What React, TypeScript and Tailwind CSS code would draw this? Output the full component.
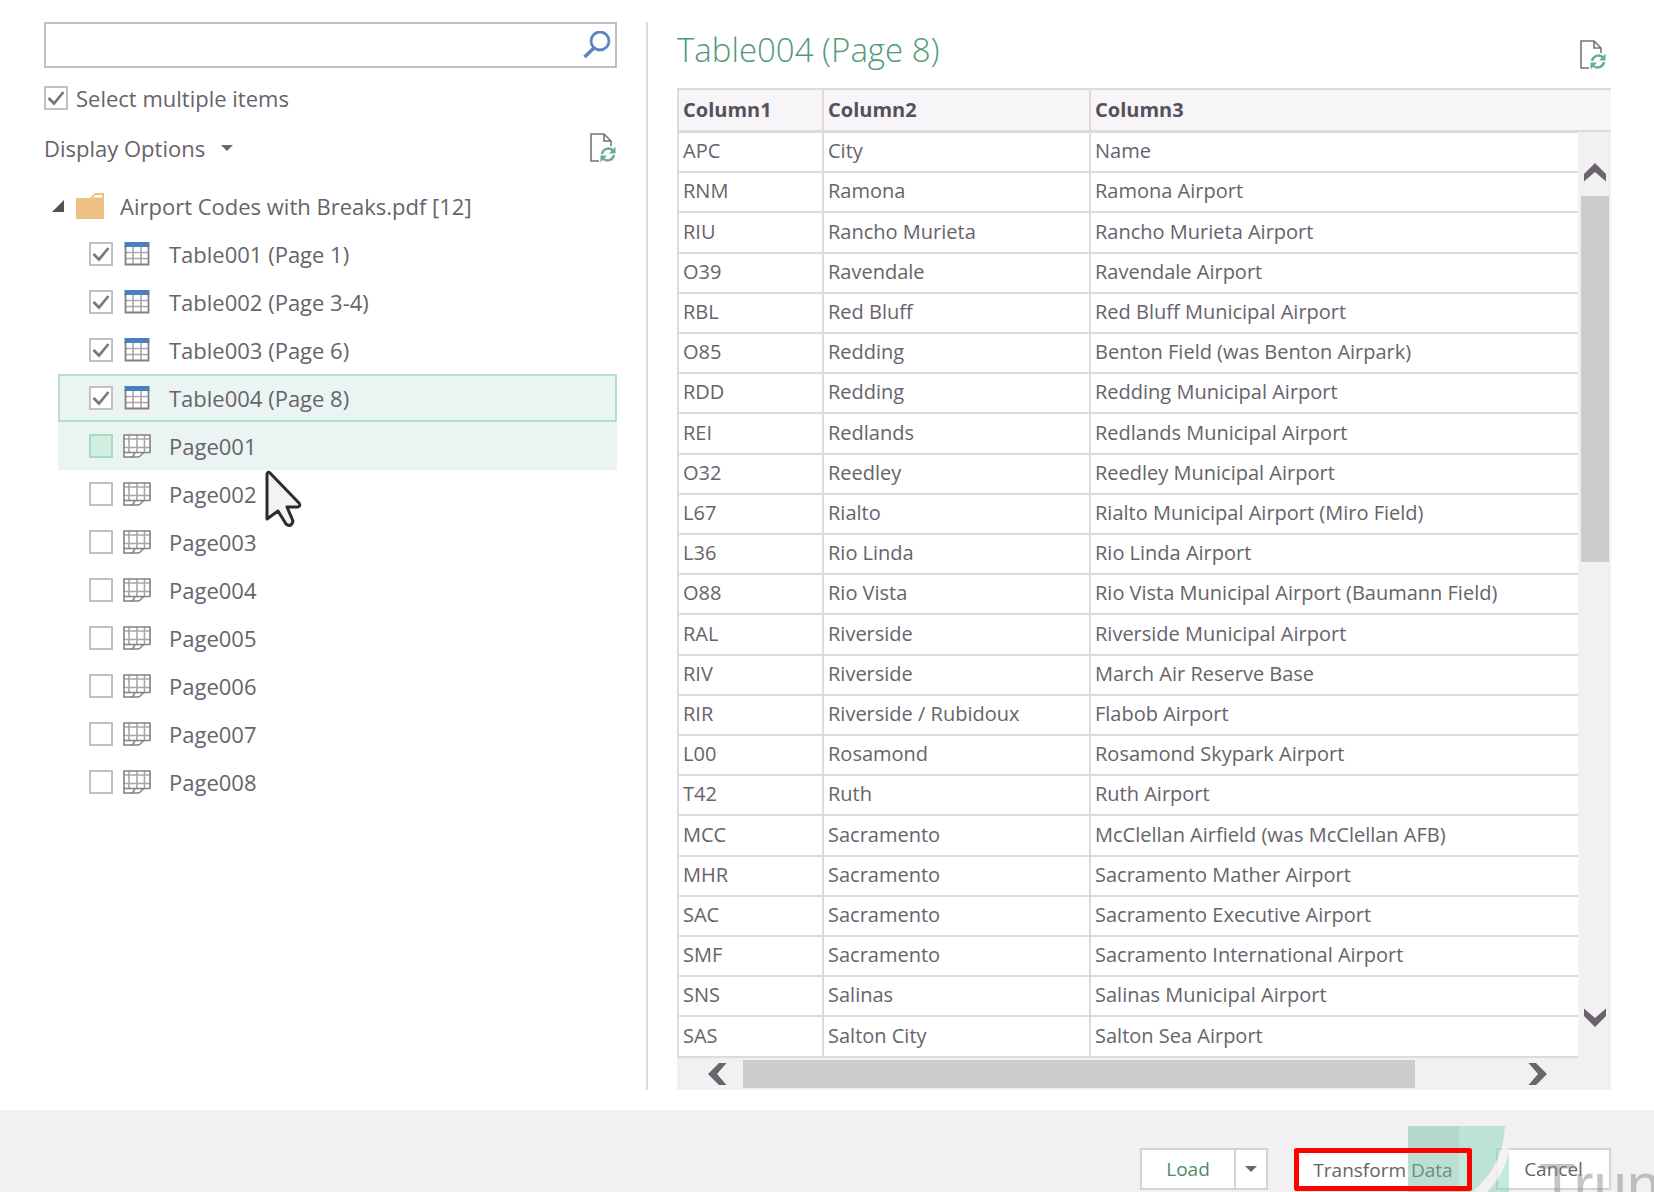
import { useState } from "react";

interface TreeItem {
  id: string;
  label: string;
  kind: "table" | "page";
}

const treeItems: TreeItem[] = [
  { id: "t1", label: "Table001 (Page 1)", kind: "table" },
  { id: "t2", label: "Table002 (Page 3-4)", kind: "table" },
  { id: "t3", label: "Table003 (Page 6)", kind: "table" },
  { id: "t4", label: "Table004 (Page 8)", kind: "table" },
  { id: "p1", label: "Page001", kind: "page" },
  { id: "p2", label: "Page002", kind: "page" },
  { id: "p3", label: "Page003", kind: "page" },
  { id: "p4", label: "Page004", kind: "page" },
  { id: "p5", label: "Page005", kind: "page" },
  { id: "p6", label: "Page006", kind: "page" },
  { id: "p7", label: "Page007", kind: "page" },
  { id: "p8", label: "Page008", kind: "page" },
];

const columns = ["Column1", "Column2", "Column3"];

const rows = [
  ["APC", "City", "Name"],
  ["RNM", "Ramona", "Ramona Airport"],
  ["RIU", "Rancho Murieta", "Rancho Murieta Airport"],
  ["O39", "Ravendale", "Ravendale Airport"],
  ["RBL", "Red Bluff", "Red Bluff Municipal Airport"],
  ["O85", "Redding", "Benton Field (was Benton Airpark)"],
  ["RDD", "Redding", "Redding Municipal Airport"],
  ["REI", "Redlands", "Redlands Municipal Airport"],
  ["O32", "Reedley", "Reedley Municipal Airport"],
  ["L67", "Rialto", "Rialto Municipal Airport (Miro Field)"],
  ["L36", "Rio Linda", "Rio Linda Airport"],
  ["O88", "Rio Vista", "Rio Vista Municipal Airport (Baumann Field)"],
  ["RAL", "Riverside", "Riverside Municipal Airport"],
  ["RIV", "Riverside", "March Air Reserve Base"],
  ["RIR", "Riverside / Rubidoux", "Flabob Airport"],
  ["L00", "Rosamond", "Rosamond Skypark Airport"],
  ["T42", "Ruth", "Ruth Airport"],
  ["MCC", "Sacramento", "McClellan Airfield (was McClellan AFB)"],
  ["MHR", "Sacramento", "Sacramento Mather Airport"],
  ["SAC", "Sacramento", "Sacramento Executive Airport"],
  ["SMF", "Sacramento", "Sacramento International Airport"],
  ["SNS", "Salinas", "Salinas Municipal Airport"],
  ["SAS", "Salton City", "Salton Sea Airport"],
];

const RefreshPageIcon = () => (
  <svg className="h-8 w-7" viewBox="0 0 28 32" fill="none">
    <path
      d="M10 29H2V2H15L22 9V14M15 2V9H22"
      stroke="#77737a"
      strokeWidth="1.6"
    />
    <path
      d="M13 22A6.5 6.5 0 0 1 24 18.5M25 23A6.5 6.5 0 0 1 14 26.5"
      stroke="#68ab97"
      strokeWidth="2.4"
    />
    <path d="M26.5 14.5V21.5H20ZM11.5 30.5V23.5H18Z" fill="#68ab97" />
  </svg>
);

const TableIcon = () => (
  <svg className="h-6 w-7" viewBox="0 0 28 24" fill="none">
    <rect x="2" y="1" width="24" height="22" fill="#fff" />
    <path
      d="M10 5V22M18 5V22M3 10.5H25M3 16.5H25"
      stroke="#aaa5ac"
      strokeWidth="1.6"
    />
    <path d="M2.5 4V22.5H25.5V4" stroke="#858088" strokeWidth="1.8" />
    <path d="M1.5 0H26.5V5H1.5Z" fill="#4a7fbe" />
  </svg>
);

const PageIcon = () => (
  <svg className="h-6 w-7" viewBox="0 0 28 24" fill="none">
    <path d="M1 1H27V19H21L17 23H1Z" fill="#fff" />
    <path
      d="M6 1V18M14 1V18M21.5 1V18M1 5H27M1 13.5H27"
      stroke="#aaa5ac"
      strokeWidth="1.6"
    />
    <path
      d="M1 1H27V18.5H1ZM1 18.5V23H8Q10 23 11 20.5L12 18.5M8 23H15Q17 23 18 21L21 18.5"
      stroke="#858088"
      strokeWidth="1.6"
    />
  </svg>
);

const Caret = () => (
  <svg className="h-2 w-3" viewBox="0 0 12 8">
    <path d="M0 1H12L6 7Z" fill="#6b676e" />
  </svg>
);

const Chevron = ({ className }: { className: string }) => (
  <svg className={className} viewBox="0 0 24 24">
    <path d="M1 14L12 3L23 14V21.5L12 12L1 21.5Z" fill="#69656b" />
  </svg>
);

interface CheckProps {
  checked: boolean;
  hovered?: boolean;
  onChange: () => void;
}

const Check = ({ checked, hovered, onChange }: CheckProps) => (
  <span className="grid size-6 shrink-0">
    <input
      type="checkbox"
      checked={checked}
      onChange={onChange}
      className={`col-start-1 row-start-1 appearance-none border-2 ${
        hovered ? "border-[#a9d9c4] bg-[#d0efe1]" : "border-[#c3bfc6] bg-white"
      }`}
    />
    {checked && (
      <svg
        className="pointer-events-none col-start-1 row-start-1 size-6"
        viewBox="0 0 24 24"
      >
        <path
          d="M4.5 12L10 17.5L19.5 6"
          fill="none"
          stroke="#77737a"
          strokeWidth="2.6"
        />
      </svg>
    )}
  </span>
);

const Navigator = () => {
  const [multiple, setMultiple] = useState(true);
  const [checkedIds, setCheckedIds] = useState(["t1", "t2", "t3", "t4"]);
  const selectedId = "t4";
  const hoveredId = "p1";

  const toggle = (id: string) => {
    setCheckedIds((prev) =>
      prev.includes(id) ? prev.filter((x) => x !== id) : [...prev, id],
    );
  };

  const rowStyle = (id: string) => {
    if (id === selectedId) return "border-[#b3dfcb] bg-[#eaf4f2]";
    if (id === hoveredId) return "border-transparent bg-[#eaf4f2]";
    return "border-transparent";
  };

  return (
    <aside className="flex w-[604px] shrink-0 flex-col border-r-2 border-[#dcd9de] pr-[29px]">
      <div className="flex h-[46px] items-center border-2 border-[#c3bfc6] pr-1">
        <input
          type="text"
          aria-label="Search"
          className="h-full min-w-0 flex-1 px-2 outline-none"
        />
        <button aria-label="Search">
          <svg className="size-7" viewBox="0 0 28 28" fill="none">
            <circle cx="17" cy="10" r="9" stroke="#5a88be" strokeWidth="2.8" />
            <path d="M11 17L1.5 26" stroke="#5a88be" strokeWidth="3.6" />
          </svg>
        </button>
      </div>

      <label className="mt-4 flex h-7 items-center gap-2">
        <Check checked={multiple} onChange={() => setMultiple(!multiple)} />
        Select multiple items
      </label>

      <div className="mt-[18px] flex h-9 items-center justify-between">
        <button className="flex items-center gap-4">
          Display Options
          <Caret />
        </button>
        <button aria-label="Refresh">
          <RefreshPageIcon />
        </button>
      </div>

      <div className="mt-4 flex h-12 items-center pl-2">
        <svg className="size-3" viewBox="0 0 12 12">
          <path d="M12 0V12H0Z" fill="#55515a" />
        </svg>
        <svg className="ml-3 h-[26px] w-7" viewBox="0 0 28 26">
          <path d="M0 5H14L19 0H28V26H0Z" fill="#edc184" />
          <path d="M17 4.5L19.5 2H26V4.5Z" fill="#fff" />
        </svg>
        <span className="ml-4">Airport Codes with Breaks.pdf [12]</span>
      </div>

      <ul className="ml-3.5">
        {treeItems.map((item) => (
          <li key={item.id}>
            <label
              className={`flex h-12 items-center border-2 pl-[29px] ${rowStyle(item.id)}`}
            >
              <Check
                checked={checkedIds.includes(item.id)}
                hovered={item.id === hoveredId}
                onChange={() => toggle(item.id)}
              />
              <span className="mr-[18px] ml-2.5">
                {item.kind === "table" ? <TableIcon /> : <PageIcon />}
              </span>
              {item.label}
            </label>
          </li>
        ))}
      </ul>
    </aside>
  );
};

const Preview = () => (
  <section className="ml-[29px] flex min-w-0 flex-1 flex-col">
    <div className="flex h-[66px] items-center justify-between pr-1">
      <h1 className="self-start text-[33px] leading-14 font-light text-[#4f9a7b]">
        Table004 (Page 8)
      </h1>
      <button aria-label="Refresh preview">
        <RefreshPageIcon />
      </button>
    </div>

    <div className="grid grid-cols-[1fr_33px] grid-rows-[44px_1fr_32px] bg-[#f2f0f3]">
      <div className="col-span-2 col-start-1 row-start-1 border-y-2 border-[#dddadf] bg-[#f7f5f8]" />
      <table className="col-start-1 row-span-2 row-start-1 h-[970px] w-full table-fixed border-collapse text-left text-[20px] leading-6">
        <colgroup>
          <col className="w-[145px]" />
          <col className="w-[267px]" />
          <col />
        </colgroup>
        <thead>
          <tr className="h-[43px]">
            {columns.map((name) => (
              <th
                key={name}
                className="border-2 border-r-0 border-[#dddadf] px-1 pb-0.5 font-bold text-[#55515a]"
              >
                {name}
              </th>
            ))}
          </tr>
        </thead>
        <tbody>
          {rows.map((row) => (
            <tr key={row[0]} className="bg-white">
              {row.map((cell, i) => (
                <td
                  key={i}
                  className="border-2 border-r-0 border-[#dddadf] px-1 pb-0.5 whitespace-nowrap"
                >
                  {cell}
                </td>
              ))}
            </tr>
          ))}
        </tbody>
      </table>
      <div className="col-start-2 row-start-2 flex flex-col items-center">
        <button aria-label="Scroll up" className="mt-7">
          <Chevron className="size-6" />
        </button>
        <div className="mt-3 h-[366px] w-7 bg-[#cecbcf]" />
        <button aria-label="Scroll down" className="mt-auto mb-7">
          <Chevron className="size-6 rotate-180" />
        </button>
      </div>
      <div className="col-start-1 row-start-3 flex h-8 items-center pl-7">
        <button aria-label="Scroll left">
          <Chevron className="size-6 -rotate-90" />
        </button>
        <div className="ml-3.5 h-7 w-[77%] bg-[#cecbcf]" />
        <button aria-label="Scroll right" className="mr-7 ml-auto">
          <Chevron className="size-6 rotate-90" />
        </button>
      </div>
    </div>
  </section>
);

const Watermark = () => (
  <div className="pointer-events-none absolute inset-y-0 right-0 w-[250px] overflow-hidden">
    <svg className="absolute top-4 left-1 h-[66px] w-[102px]" viewBox="0 0 102 66">
      <path d="M0 0H51V66H0Z" fill="#73bd9f" fillOpacity="0.48" />
      <path
        d="M51 0H97C96 28 84 50 64 66H51Z"
        fill="#82d6b4"
        fillOpacity="0.48"
      />
      <path
        d="M97 0C96 28 84 50 64 66H79C92 53 97 42 101 25Z"
        fill="#f2f0f3"
        fillOpacity="0.8"
      />
      <path d="M101 25V66H79C92 53 97 42 101 25Z" fill="#82d6b4" fillOpacity="0.48" />
    </svg>
    <span className="absolute top-[43px] left-[135px] font-['Liberation_Sans',sans-serif] text-[60px] leading-[64px] text-[#8d8a90]/50">
      Trun
    </span>
  </div>
);

const App = () => {
  return (
    <div className="relative flex min-h-screen flex-col overflow-hidden bg-white font-['Open_Sans',sans-serif] text-[22px] leading-7 text-[#67636b]">
      <main className="flex flex-1 pt-[22px] pr-[43px] pb-5 pl-11">
        <Navigator />
        <Preview />
      </main>

      <footer className="relative flex h-[82px] items-start justify-end bg-[#f2f0f3] pt-[38px] pr-[43px] text-[19px] leading-6">
        <div className="flex h-[42px] w-32 border-2 border-[#d5d2d8] bg-white">
          <button className="flex-1 text-[#4f8a6b]">Load</button>
          <button
            aria-label="Load options"
            className="flex w-8 items-center justify-center border-l-2 border-[#d5d2d8]"
          >
            <Caret />
          </button>
        </div>
        <button className="relative ml-[26px] h-[43px] w-[178px] bg-white whitespace-nowrap">
          Transform Data
          <span className="absolute inset-0 z-10 rounded-xs border-5 border-[#ff0000]" />
        </button>
        <button className="ml-6 h-[42px] w-[115px] border-2 border-[#d5d2d8] bg-white">
          Cancel
        </button>
        <Watermark />
      </footer>

      <svg
        className="pointer-events-none absolute top-[470px] left-[264px] h-[58px] w-[38px]"
        viewBox="0 0 38 58"
      >
        <path
          d="M3 4V49L14 41L22 54Q27 58 29 51L23 37H34Q37 36 35 33L6 3Q4 1 3 4Z"
          fill="#f3f2f4"
          stroke="#2c2a2e"
          strokeWidth="3"
          strokeLinejoin="round"
        />
      </svg>
    </div>
  );
};

export default App;
